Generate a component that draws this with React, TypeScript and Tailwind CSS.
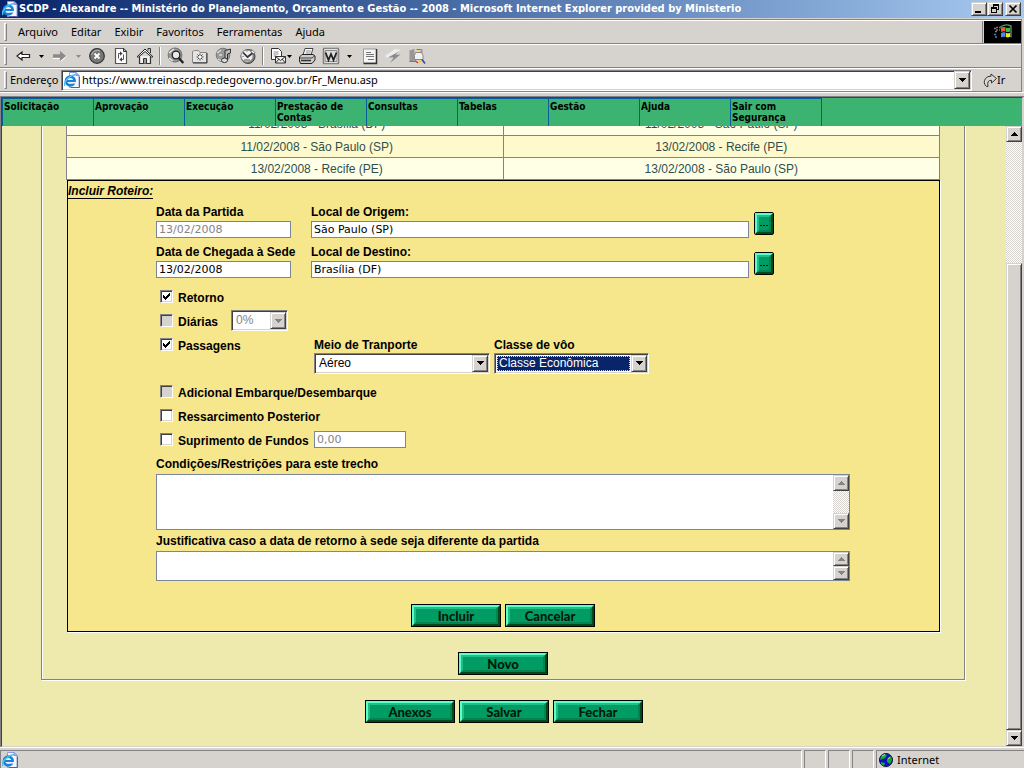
import type { ReactNode } from 'react';

const raised =
  'border-t border-l border-b border-r border-t-[#d6d3ce] border-l-[#d6d3ce] border-b-[#404040] border-r-[#404040] bg-[#d6d3ce] shadow-[inset_1px_1px_0_#fff,inset_-1px_-1px_0_#848284]';
const sunken =
  'border border-t-[#848284] border-l-[#848284] border-b-white border-r-white shadow-[inset_1px_1px_0_#404040,inset_-1px_-1px_0_#d6d3ce] bg-white';
const dither =
  'bg-[repeating-conic-gradient(#fff_0_25%,#d6d3ce_0_50%)] bg-[length:2px_2px]';

function Triangle({ up, color = '#000' }: { up?: boolean; color?: string }) {
  return (
    <svg width="7" height="4" viewBox="0 0 7 4" aria-hidden="true" shapeRendering="crispEdges">
      <path d={up ? 'M3 0h1v1h1v1h1v1h1v1H0V3h1V2h1V1h1z' : 'M0 0h7v1H6v1H5v1H4v1H3V3H2V2H1V1H0z'} fill={color} />
    </svg>
  );
}

function IeIcon() {
  return (
    <svg width="16" height="16" viewBox="0 0 16 16" aria-hidden="true" className="shrink-0">
      <path d="M5.500 .5h6.500l3 3V15.500H5.500z" fill="#f4f7ff" stroke="#8c9cd8" />
      <path d="M12 .5v3h3z" fill="#b9c6ee" stroke="#6c7fc4" strokeWidth=".7" />
      <path d="M15.500 4.500v11H7" fill="none" stroke="#5a5aa8" />
      <circle cx="6.300" cy="9" r="4.300" fill="#e4f6ff" stroke="#1a80d8" strokeWidth="2.700" />
      <path d="M3 9h7.800" stroke="#1a80d8" strokeWidth="2" />
      <path d="M8 10.800h4.500" stroke="#f4f7ff" strokeWidth="1.500" />
      <path d="M.8 14C-.8 9.500 6 3 12 2.800" fill="none" stroke="#52bdf2" strokeWidth="1.500" />
    </svg>
  );
}

function ToolIcon({ label, children, className }: { label: string; children: ReactNode; className: string }) {
  return (
    <button type="button" aria-label={label} className={className}>
      <svg width="18" height="18" viewBox="0 0 18 18" aria-hidden="true">{children}</svg>
    </button>
  );
}

function Grip() {
  return <span className="h-[18px] w-[3px] shrink-0 border border-t-white border-l-white border-b-[#848284] border-r-[#848284]" />;
}

function Divider() {
  return <span className="ml-[5px] h-[18px] w-[2px] shrink-0 border-l border-r border-l-[#848284] border-r-white" />;
}

function TitleBar() {
  return (
    <header className="flex h-[18px] shrink-0 items-center bg-linear-to-r from-[#0a246a] to-[#a6caf0] pr-[3px] pl-[2px]">
      <IeIcon />
      <h1 className="ml-px flex-1 overflow-hidden font-['DejaVu_Sans_Condensed','DejaVu_Sans',sans-serif] text-[11px] leading-[16px] font-bold whitespace-nowrap text-white">
        SCDP - Alexandre -- Ministério do Planejamento, Orçamento e Gestão -- 2008 - Microsoft Internet Explorer provided by Ministerio
      </h1>
      <button type="button" aria-label="Minimizar" className={`h-[14px] w-4 ${raised}`}>
        <svg width="14" height="12" viewBox="0 0 14 12" aria-hidden="true"><path d="M3 8h6v2H3z" /></svg>
      </button>
      <button type="button" aria-label="Restaurar" className={`h-[14px] w-4 ${raised}`}>
        <svg width="14" height="12" viewBox="0 0 14 12" aria-hidden="true" shapeRendering="crispEdges">
          <path d="M5 1h6v6H9V6h1V3H6v1H5zM3 4h6v6H3zM4 6v3h4V6z" fillRule="evenodd" />
        </svg>
      </button>
      <button type="button" aria-label="Fechar janela" className={`ml-[2px] h-[14px] w-4 ${raised}`}>
        <svg width="14" height="12" viewBox="0 0 14 12" aria-hidden="true">
          <path d="M3.500 2.500l7 7M10.500 2.500l-7 7" stroke="#000" strokeWidth="1.700" />
        </svg>
      </button>
    </header>
  );
}

const menus = ['Arquivo', 'Editar', 'Exibir', 'Favoritos', 'Ferramentas', 'Ajuda'];

function MenuBar() {
  return (
    <div className="flex h-6 border-t border-b border-t-white border-b-[#848284]">
      <nav className="flex flex-1 items-center border-r border-[#848284] pl-[4px]">
        <Grip />
        <div className="ml-[11px] flex gap-[13px]">
          {menus.map((m) => (
            <button type="button" key={m} className="text-[11px] leading-[16px]">{m}</button>
          ))}
        </div>
      </nav>
      <div className="ml-px flex w-[37px] items-center justify-center bg-black">
        <svg width="20" height="17" viewBox="0 0 20 17" aria-hidden="true">
          <path d="M1 4.500h3M2 7.500h2M1 10.500h3M2 13h3" stroke="#5c7fc0" strokeWidth="1.500" strokeDasharray="2 1" />
          <path d="M3 3.500h4M3 6h4" stroke="#c0584c" strokeWidth="1.500" strokeDasharray="2 1" />
          <path d="M8 4.500V2.500Q13-.5 18 2v10.500q-1.500-1-2.500 0" fill="none" stroke="#4e9a62" strokeWidth="1.400" />
          <path d="M8 4q2-1.500 4.500-.7v4.200q-2.500-.8-4.500.5z" fill="#f05a2c" />
          <path d="M13 3.500q2 1 4 0v4q-2 1-4 .2z" fill="#41b845" />
          <path d="M8 9q2-1.300 4.500-.5v4.500Q10 12.300 8 13.500z" fill="#428ce8" />
          <path d="M13 8.700q2 1 4 0v4.100q-2 1-4 .3z" fill="#ffe31c" />
        </svg>
      </div>
    </div>
  );
}

function Caret({ color }: { color?: string }) {
  return (
    <svg width="5" height="3" viewBox="0 0 5 3" className="shrink-0" aria-hidden="true">
      <path d="M0 0h5L2.500 3z" fill={color ?? '#000'} />
    </svg>
  );
}

function ToolBar() {
  return (
    <div className="flex h-6 items-center border-t border-b border-t-white border-b-[#848284] pl-[4px]">
      <Grip />
      <ToolIcon label="Voltar" className="ml-[7px]">
        <path d="M3 9l5-4v2.500h7.500v3H8V13z" fill="#fff" stroke="#222" strokeWidth="1.200" />
      </ToolIcon>
      <span className="ml-[7px]"><Caret /></span>
      <ToolIcon label="Avançar" className="ml-[8px]">
        <path d="M1 7.300h7V4l6 5-6 5v-3.300H1z" fill="#8a8a8a" />
        <path d="M1 11.500h6.500M8.500 14.500l6-5" stroke="#fff" />
      </ToolIcon>
      <span className="ml-[6px]"><Caret color="#8a8a8a" /></span>
      <ToolIcon label="Parar" className="ml-[7px]">
        <circle cx="9" cy="9" r="7.300" fill="#777" stroke="#333" strokeWidth="1.200" />
        <path d="M3.500 8A6 6 0 0 1 12 3.800" fill="none" stroke="#bbb" />
        <path d="M6.500 6.500l5 5M11.500 6.500l-5 5" stroke="#fff" strokeWidth="1.800" />
      </ToolIcon>
      <ToolIcon label="Atualizar" className="ml-[6px]">
        <path d="M3.500 1.500h8l3 3v12h-11z" fill="#fff" stroke="#555" strokeWidth="1.200" />
        <path d="M11.500 1.500v3h3" fill="none" stroke="#333" />
        <path d="M8.500 6.500H6.500v5M9.500 12.500h2v-5" fill="none" stroke="#555" />
        <path d="M8 4.300l2.700 2.200L8 8.700zM10 10.300v4.400l-2.700-2.200z" fill="#444" />
      </ToolIcon>
      <ToolIcon label="Página inicial" className="ml-[6px]">
        <path d="M12 3.500v-2h2.500V6" fill="#ccc" stroke="#333" />
        <path d="M3.500 9v7.500h11V9" fill="#eee" stroke="#333" strokeWidth="1.200" />
        <path d="M1 9.800L9 2l8 7.800-1.500.2L9 4.500 2.500 10z" fill="#fff" stroke="#222" />
        <path d="M7.500 16.500v-5h3v5" fill="#999" stroke="#333" />
      </ToolIcon>
      <Divider />
      <ToolIcon label="Pesquisar" className="ml-[6px]">
        <circle cx="8" cy="8" r="6.800" fill="#999" stroke="#777" strokeWidth="1.200" />
        <path d="M2 6q3-3 5-4M2 11q2 2 4 3" stroke="#eee" strokeWidth="1.300" fill="none" />
        <circle cx="9" cy="8" r="3.800" fill="#e9e9e9" stroke="#222" strokeWidth="1.300" />
        <path d="M11.800 11l4.500 5" stroke="#222" strokeWidth="2.300" />
      </ToolIcon>
      <ToolIcon label="Favoritos" className="ml-[6px]">
        <path d="M1.500 4.500v11h14v-10H9l-1.500-2h-4z" fill="#e4e4e4" stroke="#888" />
        <path d="M16 6v10H2" fill="none" stroke="#333" />
        <path d="M9 6.500v7M5.500 10h7M6.500 7.500l5 5M11.500 7.500l-5 5" stroke="#444" />
        <circle cx="9" cy="10" r="1.500" fill="#fff" />
      </ToolIcon>
      <ToolIcon label="Mídia" className="ml-[6px]">
        <circle cx="8" cy="8" r="6.800" fill="#999" stroke="#777" />
        <path d="M2 6l4-3M3 12l4 2M4 8h3" stroke="#ddd" strokeWidth="1.300" />
        <path d="M10 13V3.500l5.500-1.500v4l-3 1v6.500" fill="#bbb" stroke="#333" />
        <ellipse cx="9.500" cy="13.300" rx="3" ry="2.300" fill="#ddd" stroke="#333" />
      </ToolIcon>
      <ToolIcon label="Histórico" className="ml-[6px]">
        <circle cx="9" cy="9.500" r="7" fill="#777" stroke="#444" />
        <circle cx="8" cy="9" r="6" fill="#eee" stroke="#999" />
        <path d="M4 5.500L8.500 10 15 5" stroke="#333" strokeWidth="1.700" fill="none" />
        <path d="M5 13h6M3.500 9.500h1M8 3.500v1" stroke="#555" />
        <path d="M12.500 2.500l3.500 3-1 1.500-3-2z" fill="#fff" stroke="#555" strokeWidth=".7" />
      </ToolIcon>
      <Divider />
      <ToolIcon label="Correio" className="ml-[5px]">
        <path d="M2.500 1.500h7l3 3v8h-10z" fill="#fff" stroke="#333" />
        <path d="M4.500 5h5M4.500 7h5M4.500 9h3" stroke="#888" />
        <path d="M6.500 9.500h10v6.500h-10z" fill="#eee" stroke="#333" />
        <path d="M6.500 9.500l5 4 5-4M6.500 16l3.500-4M16.500 16L13 12" fill="none" stroke="#333" />
      </ToolIcon>
      <Caret />
      <ToolIcon label="Imprimir" className="ml-[6px]">
        <path d="M5 8l2-6.500h8L13 8" fill="#fff" stroke="#444" />
        <path d="M8 4h5M7.500 6h5" stroke="#888" />
        <path d="M1.500 10L4 7.500h11l2 1.500v4l-3 3.500H2.500L1.500 14z" fill="#ccc" stroke="#222" />
        <path d="M2 11h12l2.500-2" fill="none" stroke="#444" />
        <path d="M3 13.500h10" stroke="#333" strokeWidth="1.500" />
      </ToolIcon>
      <ToolIcon label="Editar com Word" className="ml-[6px]">
        <path d="M1.500 1.500h15v15h-15z" fill="#fff" stroke="#222" strokeWidth="1.500" strokeDasharray="1 1" />
        <path d="M3 3.500h12v11H3z" fill="#ddd" stroke="#888" />
        <path d="M3.500 5.500L6.500 13 9 7l2.500 6 3-7.500" fill="none" stroke="#222" strokeWidth="1.800" />
      </ToolIcon>
      <span className="ml-[7px]"><Caret /></span>
      <ToolIcon label="Discutir" className="ml-[9px]">
        <path d="M2.500 2h13v14h-13z" fill="#f5f5f5" stroke="#999" />
        <path d="M15.500 2v14.500H2.500" fill="none" stroke="#333" strokeWidth="1.500" />
        <path d="M5 5.500h5M5 7.500h8M5 9.500h8M7 12.500h6" stroke="#777" />
      </ToolIcon>
      <ToolIcon label="Mensagens" className="ml-[5px]">
        <path d="M1.500 8.500L11 2l6 1-4.500 4.500h4L6 16l3-5.500H2z" fill="#ededed" />
        <path d="M16.500 3.500L11.500 7.500h5L6 16l3.500-5.500H4z" fill="#8b8b8b" />
      </ToolIcon>
      <ToolIcon label="Referências" className="ml-[6px]">
        <path d="M2.500 3v11M5.500 2v12M13.500 2v4" stroke="#999" strokeWidth="2" />
        <path d="M4 3v11M1.500 14.500h6M8.500 2.500h4" stroke="#777" />
        <path d="M7.500 5.500h6l1.500 3v4H6.500v-4z" fill="#f1f1f1" stroke="#888" />
        <path d="M9.500 3h2v2h-2z" fill="#f6dc3c" />
        <path d="M7 13.500l3 2.500" stroke="#d33" strokeWidth="1.300" />
        <path d="M10.500 14.500h3" stroke="#f2cf25" strokeWidth="2" />
        <path d="M14 12.500l3 4" stroke="#3a43a0" strokeWidth="1.500" />
      </ToolIcon>
    </div>
  );
}

function AddressBar() {
  return (
    <form className="flex h-6 items-center border-t border-b border-t-white border-b-[#848284] pl-[4px]" onSubmit={(e) => e.preventDefault()}>
      <Grip />
      <label htmlFor="address" className="ml-[3px] w-[51px] text-[11px] leading-[16px]">Endereço</label>
      <div className={`flex h-[21px] flex-1 items-center pr-px pl-[2px] ${sunken}`}>
        <IeIcon />
        <input
          id="address"
          defaultValue="https://www.treinascdp.redegoverno.gov.br/Fr_Menu.asp"
          className="ml-[2px] h-4 min-w-0 flex-1 bg-transparent text-[11px] leading-[16px] outline-none"
        />
        <button type="button" aria-label="Endereços recentes" className={`flex h-[18px] w-4 items-center justify-center ${raised}`}>
          <Triangle />
        </button>
      </div>
      <button type="submit" className="ml-[11px] flex w-[38px] items-center text-[11px] leading-[16px]">
        <svg width="14" height="15" viewBox="0 0 14 15" aria-hidden="true">
          <path d="M3.500 13.500Q-.5 10 2.500 5.500 4.500 3 8 3.200V1l5.500 4.500L8.500 10V7.300Q3.500 7 5 13.500z" fill="#d8d8d8" stroke="#333" />
        </svg>
        Ir
      </button>
    </form>
  );
}

const siteMenu = ['Solicitação', 'Aprovação', 'Execução', 'Prestação de Contas', 'Consultas', 'Tabelas', 'Gestão', 'Ajuda', 'Sair com Segurança'];

function SiteMenu() {
  return (
    <nav className="flex h-[28px] shrink-0 bg-[#3cb371]">
      {siteMenu.map((item) => (
        <a
          href="#menu"
          key={item}
          className="w-[91px] border-t border-l border-[#0a5c9c] pt-[2px] pl-px font-['DejaVu_Sans_Condensed','DejaVu_Sans',sans-serif] text-[10px] leading-[11px] font-bold text-black last:w-[92px] last:border-r"
        >
          {item}
        </a>
      ))}
    </nav>
  );
}

const legs = [
  ['11/02/2008 - Brasília (DF)', '11/02/2008 - São Paulo (SP)'],
  ['11/02/2008 - São Paulo (SP)', '13/02/2008 - Recife (PE)'],
  ['13/02/2008 - Recife (PE)', '13/02/2008 - São Paulo (SP)'],
];

function GreenButton({ children, small, label }: { children: ReactNode; small?: boolean; label?: string }) {
  return (
    <button
      type="button"
      aria-label={label}
      className={`flex h-[23px] border border-black ${small ? 'w-5 rounded-xs' : 'w-[90px]'}`}
    >
      <span className="flex h-full w-full border-2 border-t-[#5effc4] border-r-[#004a18] border-b-[#004a18] border-l-[#5effc4]">
        <span className="flex h-full w-full items-center justify-center border-2 border-t-[#22bd88] border-r-[#008552] border-b-[#008552] border-l-[#22bd88] bg-[#009c63] pt-[2px] font-['Lato',sans-serif] text-[13px] leading-[13px] font-black text-[#001a0c]">
          {children}
        </span>
      </span>
    </button>
  );
}

const fieldClass = "block h-[17px] w-full border border-[#7b869c] bg-white px-[2px] font-['DejaVu_Sans',sans-serif] text-[11px] leading-[15px] text-black outline-none disabled:text-[#848284]";
const labelClass = 'block text-[12px] leading-[18px] font-bold';

function LegRow({ id, dateLabel, date, placeLabel, place, disabled }: { id: string; dateLabel: string; date: string; placeLabel: string; place: string; disabled?: boolean }) {
  return (
    <div className="flex pr-[76px]">
      <div className="w-[135px]">
        <label htmlFor={`${id}-date`} className={`${labelClass} whitespace-nowrap`}>{dateLabel}</label>
        <input id={`${id}-date`} defaultValue={date} disabled={disabled} className={fieldClass} />
      </div>
      <div className="ml-5 flex-1">
        <label htmlFor={`${id}-place`} className={labelClass}>{placeLabel}</label>
        <input id={`${id}-place`} defaultValue={place} className={fieldClass} />
      </div>
      <div className="ml-[5px] pt-[9px]">
        <GreenButton small label={`Procurar ${placeLabel}`}>
          <svg width="8" height="1" viewBox="0 0 8 1" aria-hidden="true" className="mt-[3px]" shapeRendering="crispEdges">
            <path d="M0 0h2v1H0zM3 0h2v1H3zM6 0h2v1H6z" fill="#001a0c" />
          </svg>
        </GreenButton>
      </div>
    </div>
  );
}

function Check({ label, checked, disabled }: { label: string; checked?: boolean; disabled?: boolean }) {
  return (
    <label className="flex h-6 items-center pl-1 text-[12px] leading-[18px] font-bold">
      <span className="mr-[5px] grid">
        <input
          type="checkbox"
          defaultChecked={checked}
          disabled={disabled}
          className={`peer col-start-1 row-start-1 h-[13px] w-[13px] appearance-none ${sunken} disabled:bg-[#d6d3ce]`}
        />
        <svg viewBox="0 0 13 13" className="pointer-events-none col-start-1 row-start-1 hidden h-[13px] w-[13px] peer-checked:block" aria-hidden="true" shapeRendering="crispEdges">
          <path d="M3 5h1v1h1v1h1V6h1V5h1V4h1V3h1v3H9v1H8v1H7v1H6v1H5V9H4V8H3z" />
        </svg>
      </span>
      <span className="pt-[2px]">{label}</span>
    </label>
  );
}

function Select({ id, value, className, disabled, active, label }: { id: string; value: string; className: string; disabled?: boolean; active?: boolean; label?: string }) {
  return (
    <span className={`flex h-[21px] p-px ${sunken} ${className}`}>
      <select
        id={id}
        aria-label={label}
        disabled={disabled}
        defaultValue={value}
        className={`m-px min-w-0 flex-1 appearance-none border px-px text-[12px] leading-[13px] outline-none disabled:opacity-100 ${
          active ? 'border-dotted border-[#f5d98f] bg-[#0a246a] text-white' : disabled ? 'border-transparent text-[#848284]' : 'border-transparent text-black'
        }`}
      >
        <option>{value}</option>
      </select>
      <span className={`flex w-4 items-center justify-center ${raised}`}><Triangle color={disabled ? '#848284' : '#000'} /></span>
    </span>
  );
}

function TextArea({ id, label, className }: { id: string; label: string; className: string }) {
  return (
    <div>
      <label htmlFor={id} className="block text-[12px] leading-[20px] font-bold">{label}</label>
      <div className={`flex border border-[#7b869c] bg-white ${className}`}>
        <textarea id={id} className="min-w-0 flex-1 resize-none overflow-hidden p-[2px] font-['DejaVu_Sans',sans-serif] text-[11px] outline-none" />
        <div className={`flex w-4 flex-col justify-between ${dither}`} aria-hidden="true">
          <span className={`flex max-h-4 flex-1 items-center justify-center ${raised}`}><Triangle up color="#848284" /></span>
          <span className={`mt-auto flex max-h-4 flex-1 items-center justify-center ${raised}`}><Triangle color="#848284" /></span>
        </div>
      </div>
    </div>
  );
}

function LegForm() {
  return (
    <section className="ml-px border border-black bg-[#f6e68c] pb-1 shadow-[1px_1px_0_#fff]">
      <h2 className="flex h-[22px]">
        <span className="h-[18px] border-b border-black pt-[2px] text-[12px] leading-[16px] font-bold italic">Incluir Roteiro:</span>
      </h2>
      <div className="pr-[89px] pl-[88px]">
        <div className="flex flex-col gap-[5px]">
          <LegRow id="departure" dateLabel="Data da Partida" date="13/02/2008" placeLabel="Local de Origem:" place="São Paulo (SP)" disabled />
          <LegRow id="arrival" dateLabel="Data de Chegada à Sede" date="13/02/2008" placeLabel="Local de Destino:" place="Brasília (DF)" />
        </div>
        <div className="mt-[7px]">
          <Check label="Retorno" checked />
          <div className="flex items-center gap-[13px]">
            <Check label="Diárias" disabled />
            <Select id="percent" label="Percentual de diárias" value="0%" className="w-[57px]" disabled />
          </div>
          <div className="flex h-[47px]">
            <div className="w-[158px]"><Check label="Passagens" checked /></div>
            <div className="pt-[5px]">
              <label htmlFor="transport" className="block text-[12px] leading-[15px] font-bold">Meio de Tranporte</label>
              <Select id="transport" value="Aéreo" className="w-[176px]" />
            </div>
            <div className="ml-1 pt-[5px]">
              <label htmlFor="flight-class" className="block text-[12px] leading-[15px] font-bold">Classe de vôo</label>
              <Select id="flight-class" value="Classe Econômica" className="w-[155px]" active />
            </div>
          </div>
          <Check label="Adicional Embarque/Desembarque" disabled />
          <Check label="Ressarcimento Posterior" />
          <div className="flex items-center">
            <div className="w-[158px]"><Check label="Suprimento de Fundos" /></div>
            <div className="w-[92px]"><input aria-label="Valor do suprimento" defaultValue="0,00" disabled className={fieldClass} /></div>
          </div>
        </div>
        <div className="mt-[2px] flex flex-col gap-px">
          <TextArea id="conditions" label="Condições/Restrições para este trecho" className="h-[56px]" />
          <TextArea id="reason" label="Justificativa caso a data de retorno à sede seja diferente da partida" className="h-[30px]" />
        </div>
        <div className="mt-[23px] flex justify-center gap-1">
          <GreenButton>Incluir</GreenButton>
          <GreenButton>Cancelar</GreenButton>
        </div>
      </div>
    </section>
  );
}

function ScrollBar() {
  return (
    <div className={`flex w-4 shrink-0 flex-col ${dither}`} aria-hidden="true">
      <span className={`flex h-4 items-center justify-center ${raised}`}><Triangle up /></span>
      <span className="flex-[121]" />
      <span className={`flex-[467] ${raised}`} />
      <span className={`flex h-4 items-center justify-center ${raised}`}><Triangle /></span>
    </div>
  );
}

function StatusBar() {
  return (
    <footer className="flex h-[20px] shrink-0 gap-[2px] pt-[2px]">
      <div className="flex flex-1 items-center border-t border-l border-r border-t-[#848284] border-l-[#848284] border-r-white pl-px"><IeIcon /></div>
      {[0, 1, 2].map((n) => (
        <div key={n} className="w-[22px] border-t border-l border-r border-t-[#848284] border-l-[#848284] border-r-white" />
      ))}
      <div className="flex w-[148px] items-center border-t border-l border-[#848284] pl-[2px] text-[11px] leading-[16px]">
        <svg width="14" height="14" viewBox="0 0 14 14" aria-hidden="true" className="mr-[4px]">
          <circle cx="7" cy="7" r="6.500" fill="#1010c8" stroke="#101040" />
          <path d="M2 3.500Q5 .5 8 1.500L6.500 5l-3 1L1 7zM8 6l4-3 1 4-2 4-3-2zM2 9l4 1-1 3-3-2z" fill="#10b020" />
          <path d="M3 3l3-1.500M9 5.500l2-1" stroke="#b8f0b0" />
        </svg>
        Internet
      </div>
    </footer>
  );
}

export default function App() {
  return (
    <div className="flex h-screen flex-col overflow-hidden bg-[#d6d3ce] font-['Noto_Sans',sans-serif] text-black">
      <TitleBar />
      <div className="mt-px mr-[2px] shrink-0 border-t border-r border-[#848284]">
        <MenuBar />
        <ToolBar />
        <AddressBar />
      </div>
      <div className="h-1 shrink-0 border-t border-white" />
      <div className="flex min-h-0 flex-1 flex-col border-t border-l border-[#848284] shadow-[0_1px_0_#fff]">
        <div className="mr-px flex min-h-0 flex-1 flex-col border-t border-l border-r border-b border-t-[#404040] border-l-[#404040] border-r-[#d6d3ce] border-b-[#d6d3ce]">
          <SiteMenu />
          <div className="flex min-h-0 flex-1">
            <main className="min-w-0 flex-1 overflow-hidden bg-[#eeeaae] font-['Liberation_Sans',Arial,sans-serif]">
              <div className="mr-[41px] ml-[39px] border-r border-b border-l border-[#848284] pb-1 shadow-[1px_1px_0_#fff,inset_1px_0_0_#fff]">
                <div className="mx-6">
                  <table className="-mt-[13px] w-full table-fixed border-collapse border-r border-l border-[#848284]">
                    <tbody>
                      {legs.map(([from, to]) => (
                        <tr key={from} className="h-[22px] border-b border-[#848284] bg-[#ffffe6] text-[12px] leading-[19px] text-[#2f4f4f] even:bg-[#fffacd]">
                          <td className="border-r border-[#848284] p-0 pt-[2px] pl-16 text-center">{from}</td>
                          <td className="p-0 pt-[2px] text-center">{to}</td>
                        </tr>
                      ))}
                    </tbody>
                  </table>
                  <LegForm />
                  <div className="mt-5 flex justify-center">
                    <GreenButton>Novo</GreenButton>
                  </div>
                </div>
              </div>
              <div className="mt-5 flex justify-center gap-1">
                <GreenButton>Anexos</GreenButton>
                <GreenButton>Salvar</GreenButton>
                <GreenButton>Fechar</GreenButton>
              </div>
            </main>
            <ScrollBar />
          </div>
        </div>
      </div>
      <div className="h-px shrink-0 bg-white" />
      <StatusBar />
    </div>
  );
}
